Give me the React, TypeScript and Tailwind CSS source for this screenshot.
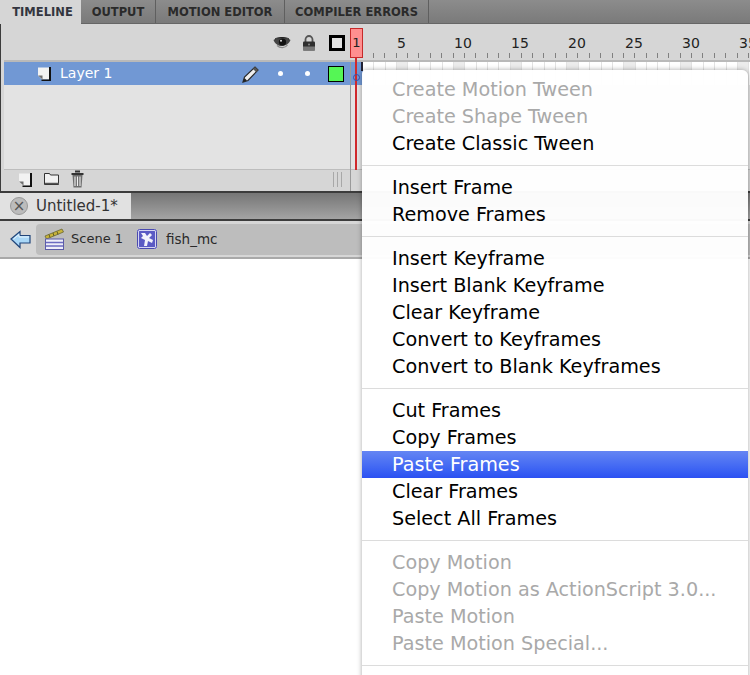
const font = "font-['DejaVu_Sans','Liberation_Sans',sans-serif]";

const menuGroups = [
  [
    { label: "Create Motion Tween", off: true },
    { label: "Create Shape Tween", off: true },
    { label: "Create Classic Tween" },
  ],
  [{ label: "Insert Frame" }, { label: "Remove Frames" }],
  [
    { label: "Insert Keyframe" },
    { label: "Insert Blank Keyframe" },
    { label: "Clear Keyframe" },
    { label: "Convert to Keyframes" },
    { label: "Convert to Blank Keyframes" },
  ],
  [
    { label: "Cut Frames" },
    { label: "Copy Frames" },
    { label: "Paste Frames", active: true },
    { label: "Clear Frames" },
    { label: "Select All Frames" },
  ],
  [
    { label: "Copy Motion", off: true },
    { label: "Copy Motion as ActionScript 3.0...", off: true },
    { label: "Paste Motion", off: true },
    { label: "Paste Motion Special...", off: true },
  ],
];

const frameNumbers = [5, 10, 15, 20, 25, 30, 35];
const ticks = Array.from({ length: 35 }, (_, i) => i);
const cells = Array.from({ length: 35 }, (_, i) => i + 2);

function Eye() {
  return (
    <svg width="18" height="14" viewBox="0 0 18 14">
      <path d="M0.500 4C4 0.500 14 0.500 17.500 4 15 11 4 13 0.500 4z" fill="#444" />
      <circle cx="9.500" cy="6" r="3.600" fill="#111" />
      <path d="M4 9.500c3 3 8 3 10.500-0.500" stroke="#8a8a8a" strokeWidth="1.200" fill="none" />
      <path d="M2 3C5 1 13 1 16 3" stroke="#222" fill="none" />
      <circle cx="8" cy="4.800" r="1" fill="#ddd" />
    </svg>
  );
}

function Lock() {
  return (
    <svg width="14" height="16" viewBox="0 0 14 16">
      <path d="M3.500 7V4.500a3.500 3.500 0 0 1 7 0V7" stroke="#555" strokeWidth="1.800" fill="none" />
      <rect x="1" y="6.500" width="12" height="9" rx="1" fill="#2f2f2f" />
      <rect x="1" y="11.500" width="12" height="4" fill="#787878" />
      <circle cx="7" cy="9.500" r="1" fill="#888" />
    </svg>
  );
}

function PageIcon() {
  return (
    <svg width="15" height="15" viewBox="0 0 15 15">
      <path d="M1 1.500h11.500v12H5L1 9.500z" fill="#f2f2f2" />
      <path d="M13 1v13.500H4.500" stroke="#111" strokeWidth="2" fill="none" />
      <path d="M1 9.500h4.500v4z" fill="#6f6f6f" />
    </svg>
  );
}

function FolderIcon() {
  return (
    <svg width="17" height="14" viewBox="0 0 17 14">
      <path d="M1.500 1.500h5l1 1.500h8v9.500h-14z" fill="#f1f1f1" stroke="#333" strokeWidth="1" />
      <path d="M2 11.500h14" stroke="#555" strokeWidth="1.500" />
    </svg>
  );
}

function TrashIcon() {
  return (
    <svg width="15" height="18" viewBox="0 0 15 18">
      <path d="M5 1.500h5M1.500 4h12" stroke="#333" strokeWidth="2" />
      <path d="M2.500 5h10l-1 12.500h-8z" fill="#6e6e6e" />
      <path d="M5 6.500v9.500M7.500 6.500v9.500M10 6.500v9.500" stroke="#f0f0f0" strokeWidth="1.100" />
    </svg>
  );
}

function Pencil() {
  return (
    <svg width="18" height="18" viewBox="0 0 18 18">
      <path d="M1 17l1.500-5L13 2l3 3L6 15.500z" fill="#efefef" stroke="#2a2a2a" strokeWidth="1.200" />
      <path d="M13 2l3 3-2 2-3-3z" fill="#555" />
      <path d="M1 17l1.500-4 2.500 2.500z" fill="#222" />
    </svg>
  );
}

function BackArrow() {
  return (
    <svg width="21" height="19" viewBox="0 0 21 19">
      <path d="M1 9L10 1.500v4h10v7.500H10v4.500z" fill="#a9d7f7" stroke="#21457a" strokeWidth="1.200" />
      <path d="M3.500 9L9 4.500V7h10" stroke="#e6f5ff" strokeWidth="1" fill="none" />
    </svg>
  );
}

function SceneIcon() {
  return (
    <svg width="21" height="22" viewBox="0 0 21 22">
      <path d="M1 8L18 1l1.500 3L2.500 11z" fill="#c8b43c" stroke="#5d5a28" strokeWidth="0.700" />
      <path d="M5 6.500l1 3M9 5l1 3M13 3.500l1 3" stroke="#5d5a28" />
      <rect x="1.500" y="11" width="18" height="10.500" fill="#eeeef8" stroke="#5b5ba8" />
      <path d="M2 14.500h17M2 18h17" stroke="#6a6ac0" strokeWidth="1.500" />
    </svg>
  );
}

function SymbolIcon() {
  return (
    <svg width="20" height="20" viewBox="0 0 20 20">
      <rect x="1" y="1" width="18" height="18" rx="1.500" fill="#5a5ac4" stroke="#d5d5f2" strokeWidth="2" />
      <rect x="0.500" y="0.500" width="19" height="19" rx="2" fill="none" stroke="#4a4ab0" />
      <path d="M4 4h4l2 3 3-3 2 2-3 3 4 2-1 3-4-2-1 5H7l1-6-4-2 2-2z" fill="#f2f2fc" />
    </svg>
  );
}

function App() {
  return (
    <div className={`${font} relative h-[675px] w-[750px] overflow-hidden bg-white`}>
      {/* timeline tabs */}
      <div className="flex h-6 border-b border-[#666] bg-gradient-to-b from-[#8c8c8c] to-[#7a7a7a] text-[11.500px] font-bold">
        <div className="-mb-px flex w-[81px] shrink-0 items-center justify-center bg-[#d6d6d6] pl-[4px] pt-[2px] text-[#33353f]">
          TIMELINE
        </div>
        <div className="flex w-[75px] items-center justify-center border-r border-[#5f5f5f] pt-[2px] text-[#2a2a2a]">OUTPUT</div>
        <div className="flex w-[129px] items-center justify-center border-r border-[#5f5f5f] pt-[2px] text-[#2a2a2a]">MOTION EDITOR</div>
        <div className="flex w-[144px] items-center justify-center border-r border-[#5f5f5f] pt-[2px] text-[#2a2a2a]">COMPILER ERRORS</div>
      </div>

      {/* timeline panel */}
      <div className="flex h-[169px] border-b-2 border-l border-[#3c3c3c] bg-[#d6d6d6]">
        <div className="flex w-[349px] shrink-0 flex-col pl-[3px]">
          <div className="flex h-[36px] items-center justify-end pr-[5px] pt-[2px]">
            <Eye />
            <span className="ml-[11px]"><Lock /></span>
            <div className="ml-[13px] h-[16px] w-[16px] border-[3px] border-black bg-[#e3e3e3]" />
          </div>
          <div className="flex h-[25px] items-center border-t-2 border-[#b9b9b9] bg-[#7198d4] pl-[33px] pr-[6px] text-white">
            <PageIcon />
            <span className="ml-[8px] text-[14px]">Layer 1</span>
            <span className="ml-auto"><Pencil /></span>
            <span className="ml-[18px] h-[5px] w-[5px] rounded-full bg-white" />
            <span className="ml-[22px] h-[5px] w-[5px] rounded-full bg-white" />
            <span className="ml-[18px] h-[16px] w-[16px] border border-black bg-[#55f655]" />
          </div>
          <div className="h-[85px] border-b border-[#bdbdbd] bg-[#e3e3e3]" />
          <div className="flex items-center gap-[10px] pl-[14px]">
            <PageIcon />
            <FolderIcon />
            <TrashIcon />
            <span className="ml-auto mr-[8px] flex h-[15px] w-[9px] justify-center border-x border-[#a8a8a8]">
              <span className="h-full w-px bg-[#a8a8a8]" />
            </span>
          </div>
        </div>

        <div className="relative flex min-w-0 flex-1 flex-col">
          <div className="flex h-[36px] shrink-0 items-center">
            <div className="mt-[2px] flex h-[30px] w-[13px] shrink-0 items-center justify-center border border-[#c62a2a] bg-[#ff8f8f] text-[13px] text-[#222]">
              1
            </div>
            <div className="ml-[34px] mt-[2px] flex text-[14px] text-[#222]">
              {frameNumbers.map((n) => (
                <span key={n} className="w-[57px] shrink-0">{n}</span>
              ))}
            </div>
          </div>
          <div className="absolute left-[23px] top-[29px] flex h-[5px] gap-[10.370px]">
            {ticks.map((i) => (
              <span key={i} className="h-[5px] w-px shrink-0 bg-[#808080]" />
            ))}
          </div>
          {/* frames row */}
          <div className="flex h-[25px] shrink-0 border-t-2 border-[#b9b9b9] bg-white">
            <div className="flex w-[13px] shrink-0 border-l border-[#9a9a9a] bg-[#7198d4]">
              <span className="ml-auto h-[9px] w-[2px] bg-[#223]" />
            </div>
            {cells.map((n) => (
              <span key={n} className={`h-full w-[11.370px] shrink-0 border-r border-[#e2e2e2] ${n % 5 === 0 ? "bg-[#ececec]" : ""}`} />
            ))}
          </div>
          <div className="flex-1 border-l border-[#9a9a9a]">
            <div className="h-[85px] border-b border-[#bdbdbd] bg-[#e3e3e3]" />
          </div>
          {/* playhead */}
          <div className="absolute left-[5px] top-[33px] h-[113px] w-[2px] bg-[#d0292c]" />
          <div className="absolute left-[3px] top-[50px] h-[7px] w-[7px] rounded-full border border-[#3a4fa8]" />
        </div>
      </div>

      {/* document tab */}
      <div className="flex h-[28px] border-b-2 border-[#3c3c3c] bg-gradient-to-b from-[#767676] to-[#a4a4a4]">
        <div className="flex w-[131px] items-center bg-[#e1e1e1] pl-[10px] text-[15px] text-[#333]">
          <span className="flex h-[18px] w-[18px] items-center justify-center rounded-full border border-[#999] bg-[#bcbcbc] text-[15px] leading-none text-[#555]">
            ×
          </span>
          <span className="ml-[8px]">Untitled-1*</span>
        </div>
      </div>

      {/* breadcrumb */}
      <div className="flex h-[38px] items-center border-b-2 border-[#a9a9a9] bg-[#d6d6d6] pl-[10px]">
        <BackArrow />
        <div className="ml-[5px] flex h-[31px] flex-1 items-center rounded-l-[4px] bg-[#bdbdbd] pl-[8px] text-[13.500px] text-[#2a2a2a]">
          <SceneIcon />
          <span className="ml-[6px] text-[13px]">Scene 1</span>
          <span className="ml-[14px]"><SymbolIcon /></span>
          <span className="ml-[9px]">fish_mc</span>
        </div>
      </div>

      {/* context menu */}
      <div className="absolute left-[362px] top-[70px] h-[620px] w-[386px] rounded-tl-[4px] rounded-tr-[6px] bg-white/97 pt-[6px] text-[19.200px] leading-[27px] text-black shadow-[0_0_5px_rgba(0,0,0,0.35)]">
        {menuGroups.map((group, i) => (
          <div key={i}>
            {i > 0 && <div className="my-[8px] h-px bg-[#dcdcdc]" />}
            {group.map((item) => (
              <div
                key={item.label}
                className={`h-[27px] whitespace-nowrap pl-[30px] ${
                  item.active
                    ? "bg-gradient-to-b from-[#6585f3] to-[#2b50f2] text-white"
                    : item.off
                      ? "text-[#a9a9a9]"
                      : ""
                }`}
              >
                {item.label}
              </div>
            ))}
          </div>
        ))}
        <div className="my-[8px] h-px bg-[#dcdcdc]" />
      </div>
    </div>
  );
}

export default App;
